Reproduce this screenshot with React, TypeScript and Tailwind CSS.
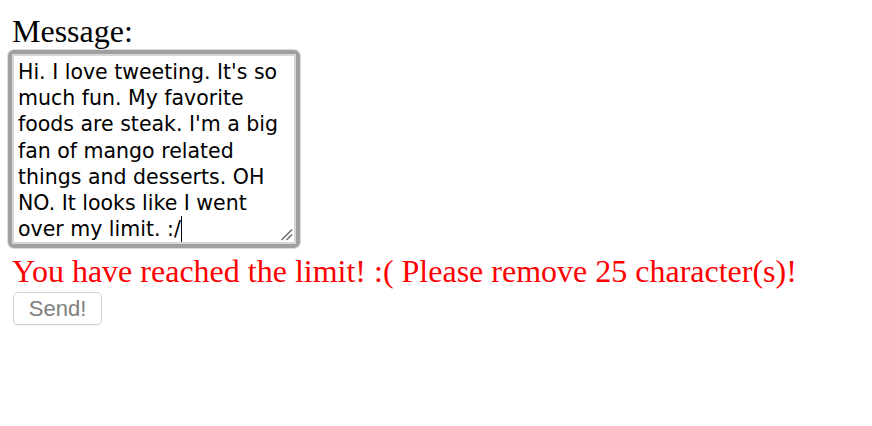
import React from "react";

const lines = [
  "Hi. I love tweeting. It's so",
  "much fun. My favorite",
  "foods are steak. I'm a big",
  "fan of mango related",
  "things and desserts. OH",
  "NO. It looks like I went",
];

export default function App() {
  return (
    <div
      className="min-h-[426px] bg-white pl-[12px] pt-[13px] text-black"
      style={{ fontFamily: '"Liberation Serif", "Times New Roman", serif' }}
    >
      <label className="block text-[32px] leading-[36px]">Message:</label>
      <div className="ml-[-4px] mt-[1px] h-[198px] w-[292px] rounded-[6px] border-[4px] border-[#a0a0a0] shadow-[0_0_0_1px_#dcdcdc]">
        <div
          role="textbox"
          className="relative h-full w-full border-2 border-[#d6d6d6] bg-white pl-[4px] pt-[3px] text-[20.5px] leading-[26.2px] text-black"
          style={{ fontFamily: '"DejaVu Sans", Verdana, sans-serif' }}
        >
          {lines.map((l) => (
            <div key={l} className="whitespace-pre">
              {l}
            </div>
          ))}
          <div className="whitespace-pre">
            over my limit. :/
            <span className="inline-block h-[26px] w-[1.5px] bg-black align-top" />
          </div>
          <svg
            className="absolute bottom-[1px] right-[1px]"
            width="13"
            height="13"
            viewBox="0 0 13 13"
          >
            <line x1="1.5" y1="12" x2="12" y2="1.5" stroke="#6f6f6f" strokeWidth="1.6" />
            <line x1="6.5" y1="12" x2="12" y2="6.5" stroke="#6f6f6f" strokeWidth="1.6" />
          </svg>
        </div>
      </div>
      <div className="mt-[5px] text-[32px] leading-[36px] text-[#ff0000]">
        You have reached the limit! :( Please remove 25 character(s)!
      </div>
      <button
        disabled
        className="ml-[1px] mt-[3px] flex h-[33px] w-[89px] items-center justify-center rounded-[5px] border border-[#d3d3d3] bg-white text-[22px] text-[#808080] shadow-[0_1px_1px_rgba(0,0,0,0.06)]"
        style={{ fontFamily: '"Liberation Sans", Arial, sans-serif' }}
      >
        Send!
      </button>
    </div>
  );
}
